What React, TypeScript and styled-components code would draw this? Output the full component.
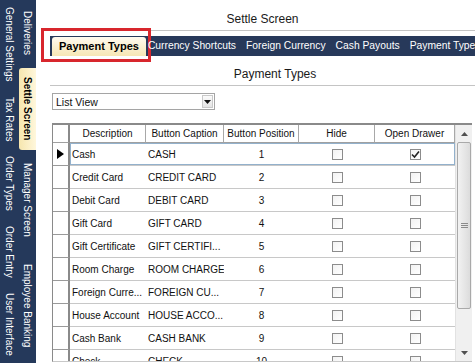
import styled, { createGlobalStyle } from "styled-components";

const GlobalStyle = createGlobalStyle`
  body {
    margin: 0;
    background: #ffffff;
    font-family: "Liberation Sans", Arial, sans-serif;
    overflow: hidden;
  }
`;

const Page = styled.div`
  display: flex;
  width: 475px;
  height: 363px;
  overflow: hidden;
  background: #ffffff;
`;

const SideBar = styled.div`
  display: flex;
  flex-shrink: 0;
  width: 36px;
  height: 100%;
  background: #25395b;
`;

const SideColumn = styled.div`
  display: flex;
  flex-direction: column;
  width: 18px;
`;

const SideTab = styled.div<{ $active?: boolean; $size?: number }>`
  display: flex;
  align-items: center;
  justify-content: center;
  flex: ${(p) => (p.$size ? `0 0 ${p.$size}px` : "1 1 auto")};
  color: ${(p) => (p.$active ? "#000000" : "#ffffff")};
  font-weight: ${(p) => (p.$active ? "bold" : "normal")};
  font-size: 10px;
  background: ${(p) =>
    p.$active ? "linear-gradient(90deg, #f6e6ae, #fff7dc)" : "transparent"};
  border-radius: ${(p) => (p.$active ? "3px 0 0 3px" : "0")};
  margin: ${(p) => (p.$active ? "2px 0 2px 1px" : "0")};
`;

const SideLabel = styled.span`
  writing-mode: vertical-rl;
  white-space: nowrap;
`;

const Main = styled.div`
  flex: 1;
  min-width: 0;
  padding-left: 14px;
`;

const Title = styled.div`
  height: 22px;
  padding-top: 8px;
  line-height: 22px;
  text-align: center;
  font-size: 12px;
  color: #1a1a1a;
  border-bottom: 1px solid #c4c4c4;
`;

const TabStrip = styled.div`
  display: flex;
  align-items: flex-end;
  height: 20px;
  margin-top: 5px;
  padding-left: 2px;
  background: #27395a;
  white-space: nowrap;
`;

const StripTab = styled.div<{ $active?: boolean }>`
  position: relative;
  flex-shrink: 0;
  height: ${(p) => (p.$active ? "19px" : "20px")};
  line-height: ${(p) => (p.$active ? "19px" : "20px")};
  padding: ${(p) => (p.$active ? "0 7px" : "0 5px")};
  margin-right: ${(p) => (p.$active ? "-3px" : "0")};
  font-size: ${(p) => (p.$active ? "11px" : "10.3px")};
  font-weight: ${(p) => (p.$active ? "bold" : "normal")};
  color: ${(p) => (p.$active ? "#000000" : "#ffffff")};
  background: ${(p) =>
    p.$active ? "linear-gradient(#fffaf0, #f6e7b4)" : "transparent"};
  border-radius: ${(p) => (p.$active ? "3px 3px 0 0" : "0")};
`;

const Highlight = styled.div`
  position: absolute;
  left: -11px;
  right: -5px;
  top: -9px;
  bottom: -6px;
  border: 3px solid #d8262d;
  pointer-events: none;
`;

const SubTitle = styled.div`
  width: 450px;
  height: 19px;
  padding-top: 10px;
  line-height: 17px;
  text-align: center;
  font-size: 12px;
  color: #1a1a1a;
  border-bottom: 1px solid #c4c4c4;
`;

const Select = styled.div`
  display: flex;
  align-items: center;
  justify-content: space-between;
  box-sizing: border-box;
  width: 163px;
  height: 17px;
  margin: 7px 0 0 2px;
  padding-left: 3px;
  border: 1px solid #a5a5a5;
  font-size: 10.5px;
  color: #111111;
`;

const SelectArrow = styled.div`
  display: flex;
  align-items: center;
  justify-content: center;
  width: 11px;
  height: 13px;
  margin-right: 1px;
  background: linear-gradient(#fbfbfb, #e4e4e4);
  border: 1px solid #c9c9c9;
  box-sizing: border-box;
`;

const Grid = styled.div`
  display: flex;
  box-sizing: border-box;
  width: 420px;
  height: 239px;
  margin: 13px 0 0 2px;
  border-top: 2px solid #8a8a8a;
  border-left: 1px solid #8a8a8a;
  border-bottom: 1px solid #c8c8c8;
  overflow: hidden;
`;

const GridBody = styled.div`
  width: 402px;
  flex-shrink: 0;
`;

const Row = styled.div`
  display: flex;
`;

const HeadCorner = styled.div`
  box-sizing: border-box;
  width: 17px;
  height: 18px;
  border-right: 2px solid #8a8a8a;
  border-bottom: 1px solid #a0a0a0;
`;

const HeadCells = styled.div`
  display: grid;
  grid-template-columns: 76px 78px 75px 76px 80px;
`;

const HeadCell = styled.div`
  box-sizing: border-box;
  height: 18px;
  line-height: 17px;
  text-align: center;
  font-size: 10px;
  color: #111111;
  background: #ffffff;
  border-right: 1px solid #a8a8a8;
  border-bottom: 1px solid #a0a0a0;
  white-space: nowrap;
  overflow: hidden;
`;

const RowHead = styled.div`
  display: flex;
  align-items: center;
  justify-content: center;
  box-sizing: border-box;
  width: 17px;
  height: 23px;
  border-right: 2px solid #8a8a8a;
  border-bottom: 1px solid #9a9a9a;
  background: #ffffff;
`;

const RowCells = styled.div<{ $current?: boolean }>`
  display: grid;
  grid-template-columns: 76px 78px 75px 76px 80px;
  box-sizing: border-box;
  height: 23px;
  border-bottom: 1px solid #c8c8c8;
  box-shadow: ${(p) => (p.$current ? "inset 0 0 0 1px #93b1cc" : "none")};
`;

const Cell = styled.div<{ $align?: string }>`
  display: flex;
  align-items: center;
  justify-content: ${(p) => p.$align || "flex-start"};
  padding-left: ${(p) => (p.$align ? "0" : "2px")};
  font-size: 10px;
  color: #111111;
  white-space: nowrap;
  overflow: hidden;
`;

const Box = styled.div`
  display: flex;
  align-items: center;
  justify-content: center;
  box-sizing: border-box;
  width: 11px;
  height: 11px;
  border: 1px solid #8c8c8c;
  background: linear-gradient(135deg, #f2f2f2, #ffffff);
`;

const ScrollBar = styled.div`
  display: flex;
  flex-direction: column;
  width: 17px;
  flex-shrink: 0;
  background: #f0f0f0;
  border-left: 1px solid #e2e2e2;
  box-sizing: border-box;
`;

const ScrollButton = styled.div`
  display: flex;
  align-items: center;
  justify-content: center;
  height: 17px;
  flex-shrink: 0;
`;

const Thumb = styled.div`
  display: flex;
  align-items: center;
  justify-content: center;
  height: 165px;
  margin: 0 1px;
  border: 1px solid #a9a9a9;
  border-radius: 2px;
  background: linear-gradient(90deg, #f2f2f2, #dcdcdc);
`;

const Spacer = styled.div`
  flex: 1;
`;

const rows = [
  ["Cash", "CASH", "1", false, true],
  ["Credit Card", "CREDIT CARD", "2", false, false],
  ["Debit Card", "DEBIT CARD", "3", false, false],
  ["Gift Card", "GIFT CARD", "4", false, false],
  ["Gift Certificate", "GIFT CERTIFI...", "5", false, false],
  ["Room Charge", "ROOM CHARGE", "6", false, false],
  ["Foreign Curre...", "FOREIGN CU...", "7", false, false],
  ["House Account", "HOUSE ACCO...", "8", false, false],
  ["Cash Bank", "CASH BANK", "9", false, false],
  ["Check", "CHECK", "10", false, false],
] as const;

const Check = ({ checked }: { checked?: boolean }) => (
  <Box>
    {checked && (
      <svg width="9" height="9" viewBox="0 0 9 9">
        <path d="M1 4.5 L3.5 7 L8 1.5" stroke="#222" strokeWidth="1.6" fill="none" />
      </svg>
    )}
  </Box>
);

export default function App() {
  return (
    <Page>
      <GlobalStyle />
      <SideBar>
        <SideColumn>
          <SideTab>
            <SideLabel>General Settings</SideLabel>
          </SideTab>
          <SideTab>
            <SideLabel>Tax Rates</SideLabel>
          </SideTab>
          <SideTab>
            <SideLabel>Order Types</SideLabel>
          </SideTab>
          <SideTab>
            <SideLabel>Order Entry</SideLabel>
          </SideTab>
          <SideTab>
            <SideLabel>User Interface</SideLabel>
          </SideTab>
        </SideColumn>
        <SideColumn>
          <SideTab $size={66}>
            <SideLabel>Deliveries</SideLabel>
          </SideTab>
          <SideTab $size={82} $active>
            <SideLabel>Settle Screen</SideLabel>
          </SideTab>
          <SideTab $size={96}>
            <SideLabel>Manager Screen</SideLabel>
          </SideTab>
          <SideTab>
            <SideLabel>Employee Banking</SideLabel>
          </SideTab>
        </SideColumn>
      </SideBar>
      <Main>
        <Title>Settle Screen</Title>
        <TabStrip>
          <StripTab $active>
            Payment Types
            <Highlight />
          </StripTab>
          <StripTab>Currency Shortcuts</StripTab>
          <StripTab>Foreign Currency</StripTab>
          <StripTab>Cash Payouts</StripTab>
          <StripTab>Payment Type Groups</StripTab>
        </TabStrip>
        <SubTitle>Payment Types</SubTitle>
        <Select>
          List View
          <SelectArrow>
            <svg width="7" height="4" viewBox="0 0 7 4">
              <path d="M0 0 H7 L3.5 4 Z" fill="#111" />
            </svg>
          </SelectArrow>
        </Select>
        <Grid>
          <GridBody>
            <Row>
              <HeadCorner />
              <HeadCells>
                <HeadCell>Description</HeadCell>
                <HeadCell>Button Caption</HeadCell>
                <HeadCell>Button Position</HeadCell>
                <HeadCell>Hide</HeadCell>
                <HeadCell>Open Drawer</HeadCell>
              </HeadCells>
            </Row>
            {rows.map(([desc, caption, pos, hide, drawer], i) => (
              <Row key={desc}>
                <RowHead>
                  {i === 0 && (
                    <svg width="7" height="10" viewBox="0 0 7 10">
                      <path d="M0 0 L7 5 L0 10 Z" fill="#000" />
                    </svg>
                  )}
                </RowHead>
                <RowCells $current={i === 0}>
                  <Cell>{desc}</Cell>
                  <Cell>{caption}</Cell>
                  <Cell $align="center">{pos}</Cell>
                  <Cell $align="center">
                    <Check checked={hide} />
                  </Cell>
                  <Cell $align="center">
                    <Check checked={drawer} />
                  </Cell>
                </RowCells>
              </Row>
            ))}
          </GridBody>
          <ScrollBar>
            <ScrollButton>
              <svg width="7" height="4" viewBox="0 0 7 4">
                <path d="M0 4 H7 L3.5 0 Z" fill="#505050" />
              </svg>
            </ScrollButton>
            <Thumb>
              <svg width="7" height="6" viewBox="0 0 7 6">
                <path d="M0 0.5 H7 M0 2.5 H7 M0 4.5 H7" stroke="#8a8a8a" strokeWidth="1" />
              </svg>
            </Thumb>
            <Spacer />
            <ScrollButton>
              <svg width="7" height="4" viewBox="0 0 7 4">
                <path d="M0 0 H7 L3.5 4 Z" fill="#505050" />
              </svg>
            </ScrollButton>
          </ScrollBar>
        </Grid>
      </Main>
    </Page>
  );
}
